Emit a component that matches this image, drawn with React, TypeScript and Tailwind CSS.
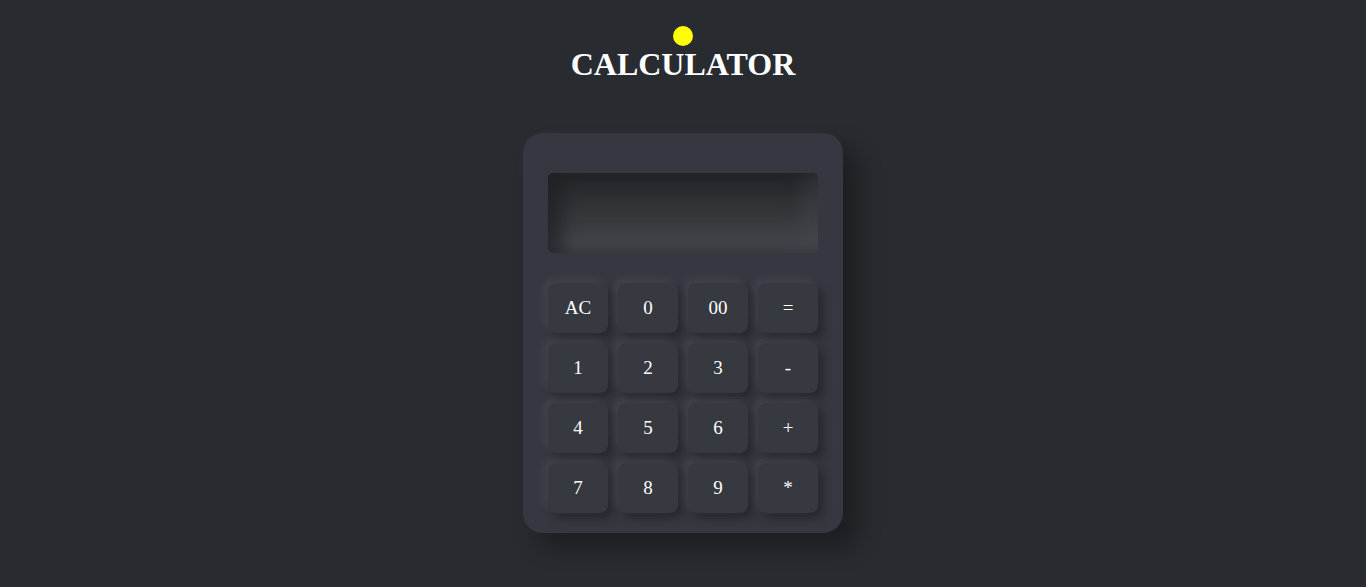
import React from "react";

const keys = ["AC", "0", "00", "=", "1", "2", "3", "-", "4", "5", "6", "+", "7", "8", "9", "*"];

export default function App() {
  return (
    <div
      className="min-h-[587px] w-full bg-[#282b2f] flex flex-col items-center pt-[26px]"
      style={{ fontFamily: '"Liberation Serif", "Times New Roman", serif' }}
    >
      <div className="w-[20px] h-[20px] rounded-full bg-[#ffff00]" />
      <h1 className="text-[32px] leading-[37px] font-bold text-white m-0">CALCULATOR</h1>
      <div className="mt-[50px] w-[320px] h-[400px] rounded-[20px] bg-[#353840] pt-[40px] px-[25px] shadow-[15px_15px_25px_rgba(0,0,0,0.3),-3px_-3px_10px_rgba(255,255,255,0.02)]">
        <div className="w-[270px] h-[80px] rounded-[5px] bg-[linear-gradient(to_bottom,#222528,#45494c)] shadow-[inset_14px_0_18px_rgba(30,33,36,0.75),inset_-14px_-12px_20px_rgba(80,84,88,0.3)]" />
        <div className="mt-[30px] grid grid-cols-[repeat(4,60px)] gap-[10px]">
          {keys.map((k) => (
            <div
              key={k}
              className="w-[60px] h-[50px] rounded-[8px] bg-[#363940] flex items-center justify-center text-white text-[19px] shadow-[-4px_-4px_10px_rgba(255,255,255,0.07),5px_5px_10px_rgba(0,0,0,0.3)]"
            >
              {k}
            </div>
          ))}
        </div>
      </div>
    </div>
  );
}
